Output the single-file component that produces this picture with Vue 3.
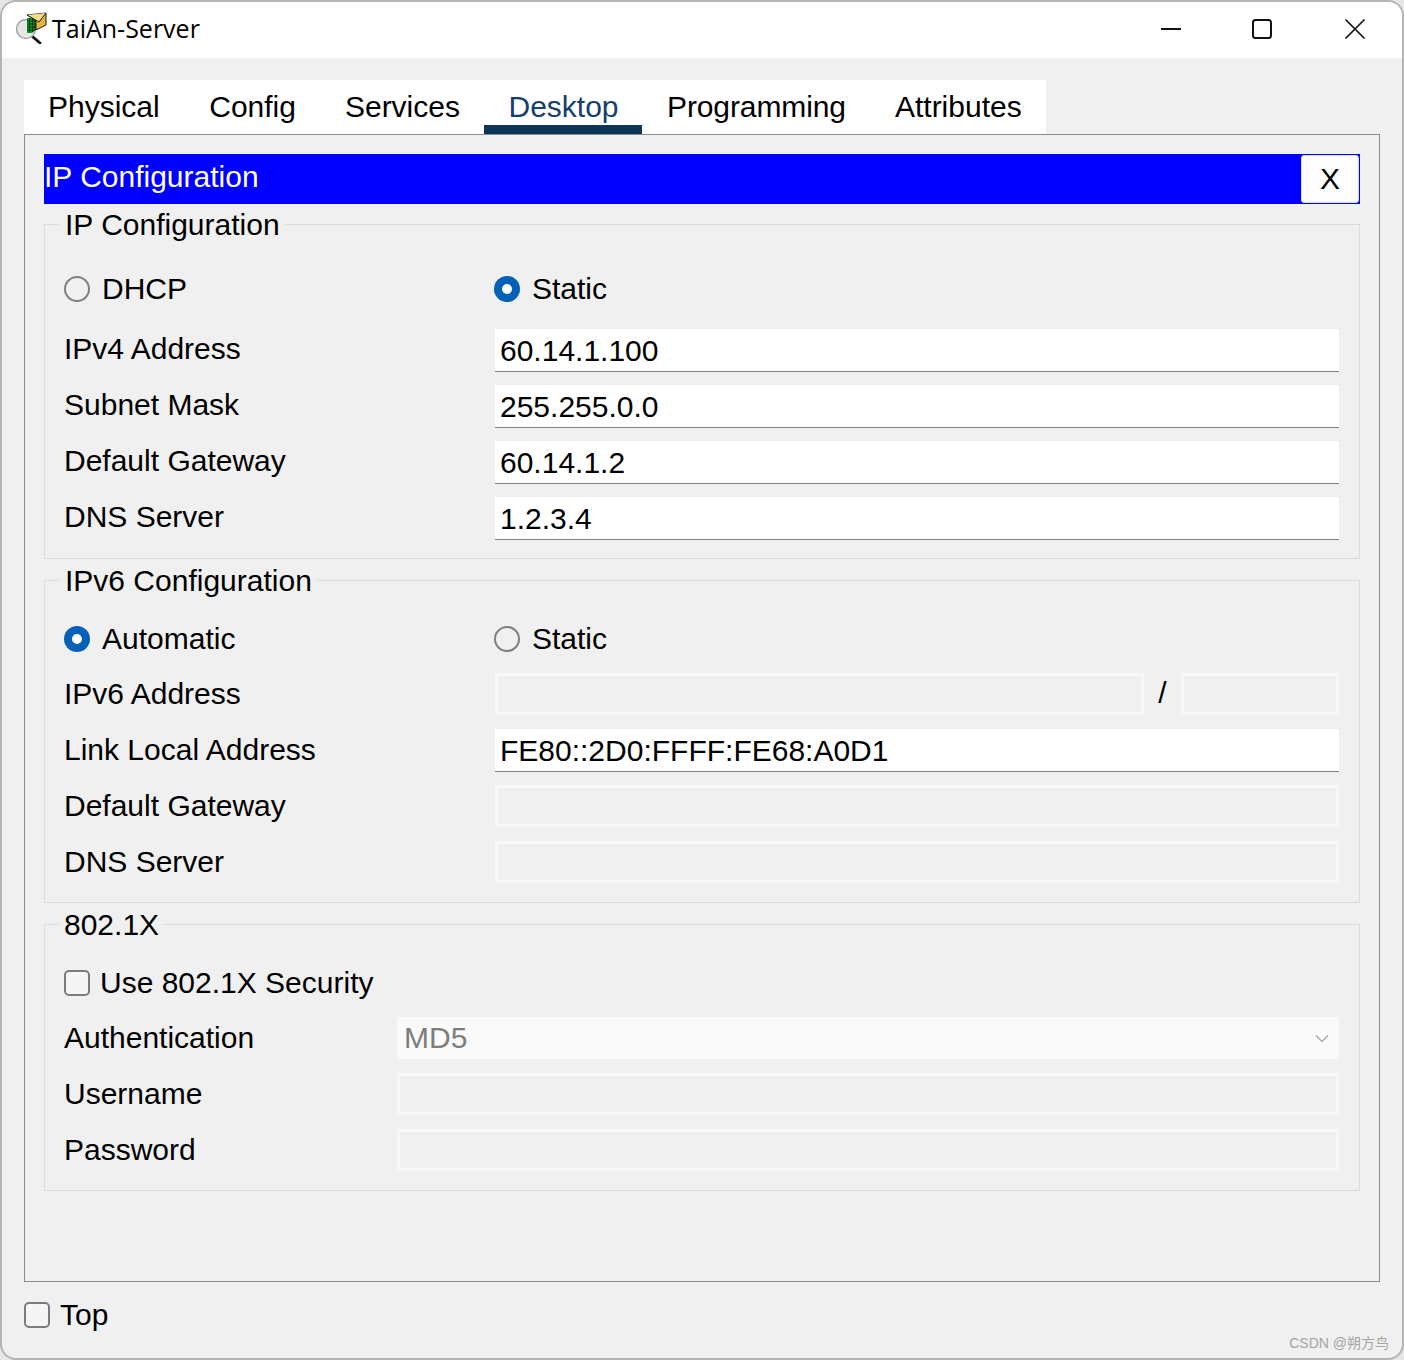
<script setup>
const tabs = ['Physical', 'Config', 'Services', 'Desktop', 'Programming', 'Attributes']
const v4Rows = [
  { label: 'IPv4 Address', value: '60.14.1.100' },
  { label: 'Subnet Mask', value: '255.255.0.0' },
  { label: 'Default Gateway', value: '60.14.1.2' },
  { label: 'DNS Server', value: '1.2.3.4' },
]
const authRows = ['Username', 'Password']
</script>

<template>
  <div class="window">
    <header class="titlebar">
      <svg class="app-icon" width="32" height="32" viewBox="0 0 32 32">
        <path d="M18 25l7 6" stroke="#111" stroke-width="2.8" stroke-linecap="round" />
        <circle cx="11" cy="17" r="9.5" fill="#e6e6e6" stroke="#a0a0a0" stroke-width="1.4" />
        <path d="M12 6h9v12l-4 3h-5z" fill="#0b9a2a" />
        <path d="M14.5 6v14M17.5 6v14M20 6v12M12 9h9M12 12h9M12 15h9M12 18h8" stroke="#04360f" stroke-width="1" />
        <path d="M12 3l19-2v12l-10 5V8z" fill="#e5b53a" stroke="#1c1c1c" stroke-width="1" stroke-linejoin="round" />
        <path d="M12 3l12 7 7-9" fill="#f5da88" stroke="#1c1c1c" stroke-width="1" stroke-linejoin="round" />
      </svg>
      <span class="title">TaiAn-Server</span>
      <div class="controls">
        <svg width="22" height="22" viewBox="0 0 22 22"><path d="M1 11h20" stroke="#111" stroke-width="2" /></svg>
        <svg width="22" height="22" viewBox="0 0 22 22"><rect x="2" y="2" width="18" height="18" rx="2.5" fill="none" stroke="#111" stroke-width="2" /></svg>
        <svg width="22" height="22" viewBox="0 0 22 22"><path d="M1.5 1.5l19 19M20.5 1.5l-19 19" stroke="#111" stroke-width="1.7" /></svg>
      </div>
    </header>

    <nav class="tabs">
      <div v-for="t in tabs" :key="t" class="tab" :class="{ active: t === 'Desktop' }">{{ t }}</div>
    </nav>

    <main class="panel">
      <div class="app-header">
        <span class="app-title">IP Configuration</span>
        <button class="close" type="button">X</button>
      </div>

      <fieldset class="group first">
        <legend>IP Configuration</legend>
        <div class="row radio-row r1">
          <label class="choice"><input type="radio" name="v4" />DHCP</label>
          <label class="choice"><input type="radio" name="v4" checked />Static</label>
        </div>
        <div class="fields f1">
          <div v-for="r in v4Rows" :key="r.label + r.value" class="row">
            <span class="label">{{ r.label }}</span>
            <input class="field" :value="r.value" />
          </div>
        </div>
      </fieldset>

      <fieldset class="group second">
        <legend>IPv6 Configuration</legend>
        <div class="row radio-row r2">
          <label class="choice"><input type="radio" name="v6" checked />Automatic</label>
          <label class="choice"><input type="radio" name="v6" />Static</label>
        </div>
        <div class="fields f2">
          <div class="row">
            <span class="label">IPv6 Address</span>
            <div class="split">
              <input class="field off" disabled />
              <span class="slash">/</span>
              <input class="field off prefix" disabled />
            </div>
          </div>
          <div class="row">
            <span class="label">Link Local Address</span>
            <input class="field" value="FE80::2D0:FFFF:FE68:A0D1" />
          </div>
          <div class="row">
            <span class="label">Default Gateway</span>
            <input class="field off" disabled />
          </div>
          <div class="row">
            <span class="label">DNS Server</span>
            <input class="field off" disabled />
          </div>
        </div>
      </fieldset>

      <fieldset class="group last">
        <legend>802.1X</legend>
        <label class="choice check-row"><input type="checkbox" class="check" />Use 802.1X Security</label>
        <div class="fields f3">
          <div class="row narrow">
            <span class="label">Authentication</span>
            <div class="select">
              <span>MD5</span>
              <svg width="14" height="9" viewBox="0 0 14 9"><path d="M1 1.5l6 6 6-6" fill="none" stroke="#a2a2a2" stroke-width="1.2" /></svg>
            </div>
          </div>
          <div v-for="a in authRows" :key="a" class="row narrow">
            <span class="label">{{ a }}</span>
            <input class="field off" disabled />
          </div>
        </div>
      </fieldset>
    </main>

    <footer class="footer">
      <label class="choice"><input type="checkbox" class="check" />Top</label>
      <span class="mark">CSDN @朔方鸟</span>
    </footer>
  </div>
</template>

<style>
html, body { margin: 0; background: #e6e6e6; }
</style>

<style scoped>
.window {
  box-sizing: border-box;
  width: 1404px;
  height: 1360px;
  display: flex;
  flex-direction: column;
  border: 2px solid #b4b4b4;
  border-radius: 16px;
  background: #f0f0f0;
  overflow: hidden;
  font-family: "Liberation Sans", Arial, sans-serif;
  font-size: 30px;
  color: #000;
}
.titlebar {
  flex: none;
  height: 56px;
  display: flex;
  align-items: center;
  background: #fff;
  padding-left: 13px;
}
.app-icon { flex: none; margin-top: -4px; }
.title {
  margin-left: 5px;
  margin-top: -4px;
  font-family: "Open Sans", "Noto Sans", sans-serif;
  font-size: 25px;
}
.controls {
  margin-left: auto;
  margin-top: -2px;
  display: flex;
  gap: 70px;
  padding-right: 36px;
}
.controls svg { display: block; }
.controls svg:nth-child(2) { margin-right: 1px; margin-left: -1px; }
.tabs {
  flex: none;
  align-self: flex-start;
  display: flex;
  margin: 22px 0 0 22px;
  background: #fff;
  height: 54px;
}
.tab {
  padding: 0 24.5px;
  line-height: 54px;
  box-sizing: border-box;
  height: 54px;
}
.tab:first-child { padding: 0 25px 0 24px; }
.tab:nth-child(5) { letter-spacing: -0.1px; }
.tab:last-child { padding-right: 24.5px; }
.tab.active {
  flex: none;
  width: 158px;
  padding: 0 24px;
  color: #15406b;
  border-bottom: 9px solid #0d3558;
}
.panel {
  flex: none;
  box-sizing: border-box;
  margin: 0 22px;
  height: 1148px;
  border: 1px solid #868b94;
  padding: 19px 19px 0;
}
.app-header {
  display: flex;
  align-items: center;
  justify-content: space-between;
  height: 50px;
  background: #00f;
  color: #fff;
}
.app-title { margin-top: -4px; }
.close {
  box-sizing: border-box;
  width: 58px;
  height: 48px;
  margin-right: 1px;
  padding: 0;
  border: 1px solid #d9d9d9;
  border-radius: 3px;
  background: #fdfdfd;
  color: #000;
  font: inherit;
}
.group {
  box-sizing: border-box;
  margin: 0;
  padding: 0 20px 0 19px;
  border: 1px solid #dcdcdc;
  min-width: 0;
}
.first { margin-top: 2px; height: 353px; }
.second { margin-top: 3px; height: 341px; }
.last { margin-top: 3px; height: 285px; }
legend {
  margin-left: -5px;
  padding: 2px 5px 0 6px;
  line-height: 34px;
}
.last legend { padding-left: 5px; }
.row {
  display: grid;
  grid-template-columns: 431px 1fr;
  grid-template-rows: 43px;
  align-items: center;
  height: 43px;
}
.row.narrow { grid-template-columns: 333px 1fr; grid-template-rows: 42px; height: 42px; }
.radio-row { height: 30px; grid-template-rows: 34px; grid-template-columns: 430px 1fr; }
.r1 { margin-top: 30px; }
.r2 { margin-top: 24px; }
.fields { display: flex; flex-direction: column; gap: 13px; }
.f1 { margin-top: 26px; }
.f2 { margin-top: 20px; }
.f3 { margin-top: 19px; gap: 14px; }
.label { margin-top: -1px; }
.f2 .label { margin-top: 1px; }
.choice {
  display: inline-flex;
  align-items: center;
  gap: 12px;
}
.choice input { margin: 0; flex: none; }
input[type="radio"] {
  appearance: none;
  box-sizing: border-box;
  width: 26px;
  height: 26px;
  border: 2px solid #808080;
  border-radius: 50%;
  background: transparent;
}
input[type="radio"]:checked {
  border: 8px solid #0560b8;
  background: #fff;
}
.check {
  appearance: none;
  box-sizing: border-box;
  width: 26px;
  height: 26px;
  border: 2px solid #7c7c7c;
  border-radius: 5px;
  background: #f5f5f5;
}
.check-row { gap: 10px; margin-top: 26px; height: 30px; display: flex; }
.field {
  box-sizing: border-box;
  width: 100%;
  height: 44px;
  min-width: 0;
  align-self: start;
  padding: 1px 5px 0;
  border: 0;
  border-top: 1px solid #f0f0f0;
  border-bottom: 1px solid #808080;
  border-radius: 0;
  background: #fff;
  font: inherit;
  color: #000;
  outline: none;
}
.field.off {
  height: 42px;
  align-self: center;
  border: 3px solid #f8f8f8;
  background: #f0f0f0;
}
.split {
  display: flex;
  align-items: center;
}
.split .field { flex: 1; }
.split .prefix { flex: none; width: 158px; }
.slash { flex: none; width: 37px; text-align: center; margin-top: -1px; }
.select {
  display: flex;
  align-items: center;
  justify-content: space-between;
  box-sizing: border-box;
  height: 42px;
  padding: 0 10px 0 7px;
  background: #fafafa;
  color: #7d7d7d;
}
.footer {
  flex: 1;
  position: relative;
  display: flex;
  align-items: flex-start;
  padding: 16px 0 0 22px;
}
.footer .choice { gap: 10px; }
.mark {
  position: absolute;
  right: 13px;
  bottom: 6px;
  font-family: "Liberation Sans", "Noto Sans CJK SC", sans-serif;
  font-size: 14px;
  color: #a3a3a3;
}
</style>
